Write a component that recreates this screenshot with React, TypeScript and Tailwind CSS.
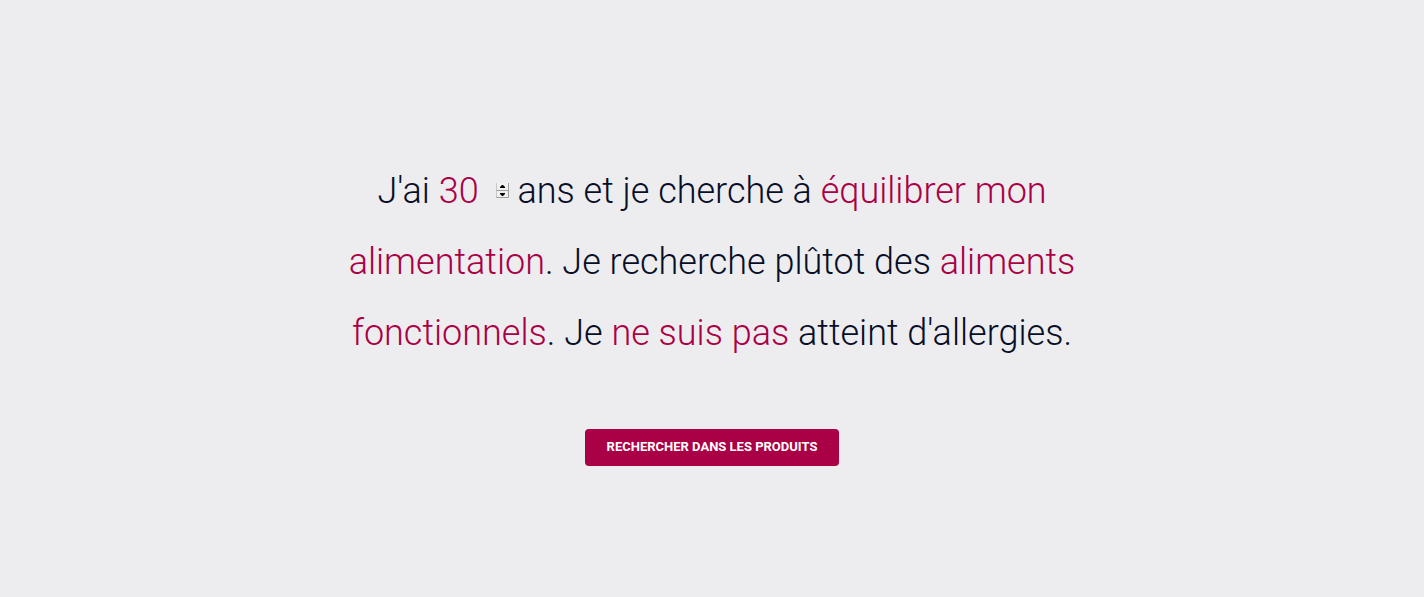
import { useState } from "react";

export default function App() {
  const [age, setAge] = useState(30);
  return (
    <main className="flex min-h-screen flex-col items-center justify-center bg-[#ededef] px-6 pt-6 font-['Roboto','Liberation_Sans',sans-serif]">
      <form className="flex w-full max-w-[730px] flex-col items-center gap-[60px]" onSubmit={(e) => e.preventDefault()}>
        <p className="text-center text-[36px] leading-[71px] font-light text-[#080e28]">
          <label htmlFor="age">J'ai</label>{" "}
          <span className="inline-flex h-[42px] w-[70px] items-baseline justify-between align-baseline">
            <input
              id="age"
              type="number"
              value={age}
              onChange={(e) => setAge(Number(e.target.value))}
              className="h-[42px] w-[52px] [appearance:textfield] bg-transparent leading-[42px] text-[#aa0045] outline-none [&::-webkit-inner-spin-button]:appearance-none"
            />
            <span className="flex w-[13px] flex-col self-center">
              <button type="button" aria-label="Augmenter l'âge" onClick={() => setAge(age + 1)} className="flex h-[8px] items-center justify-center border-r border-b border-l border-[#a0a0a0] border-l-[#c8c8c8] bg-[#f0f0f0]">
                <svg width="5" height="3" viewBox="0 0 5 3"><path d="M0 3V2L2 0H3L5 2V3Z" fill="#000" /></svg>
              </button>
              <button type="button" aria-label="Diminuer l'âge" onClick={() => setAge(age - 1)} className="flex h-[7px] items-center justify-center border-r border-b border-l border-[#a0a0a0] border-l-[#c8c8c8] bg-[#f0f0f0]">
                <svg width="5" height="3" viewBox="0 0 5 3"><path d="M0 0V1L2 3H3L5 1V0Z" fill="#000" /></svg>
              </button>
            </span>
          </span>{" "}
          ans et je cherche à <a href="#objectif" className="text-[#aa0045]">équilibrer mon alimentation</a>. Je recherche plûtot des{" "}
          <a href="#aliments" className="text-[#aa0045]">aliments fonctionnels</a>. Je{" "}
          <a href="#allergies" className="text-[#aa0045]">ne suis pas</a> atteint d'allergies.
        </p>
        <button type="submit" className="h-[37px] rounded bg-[#aa0045] px-[22px] text-[13px] leading-5 font-bold text-white uppercase">
          Rechercher dans les produits
        </button>
      </form>
    </main>
  );
}
